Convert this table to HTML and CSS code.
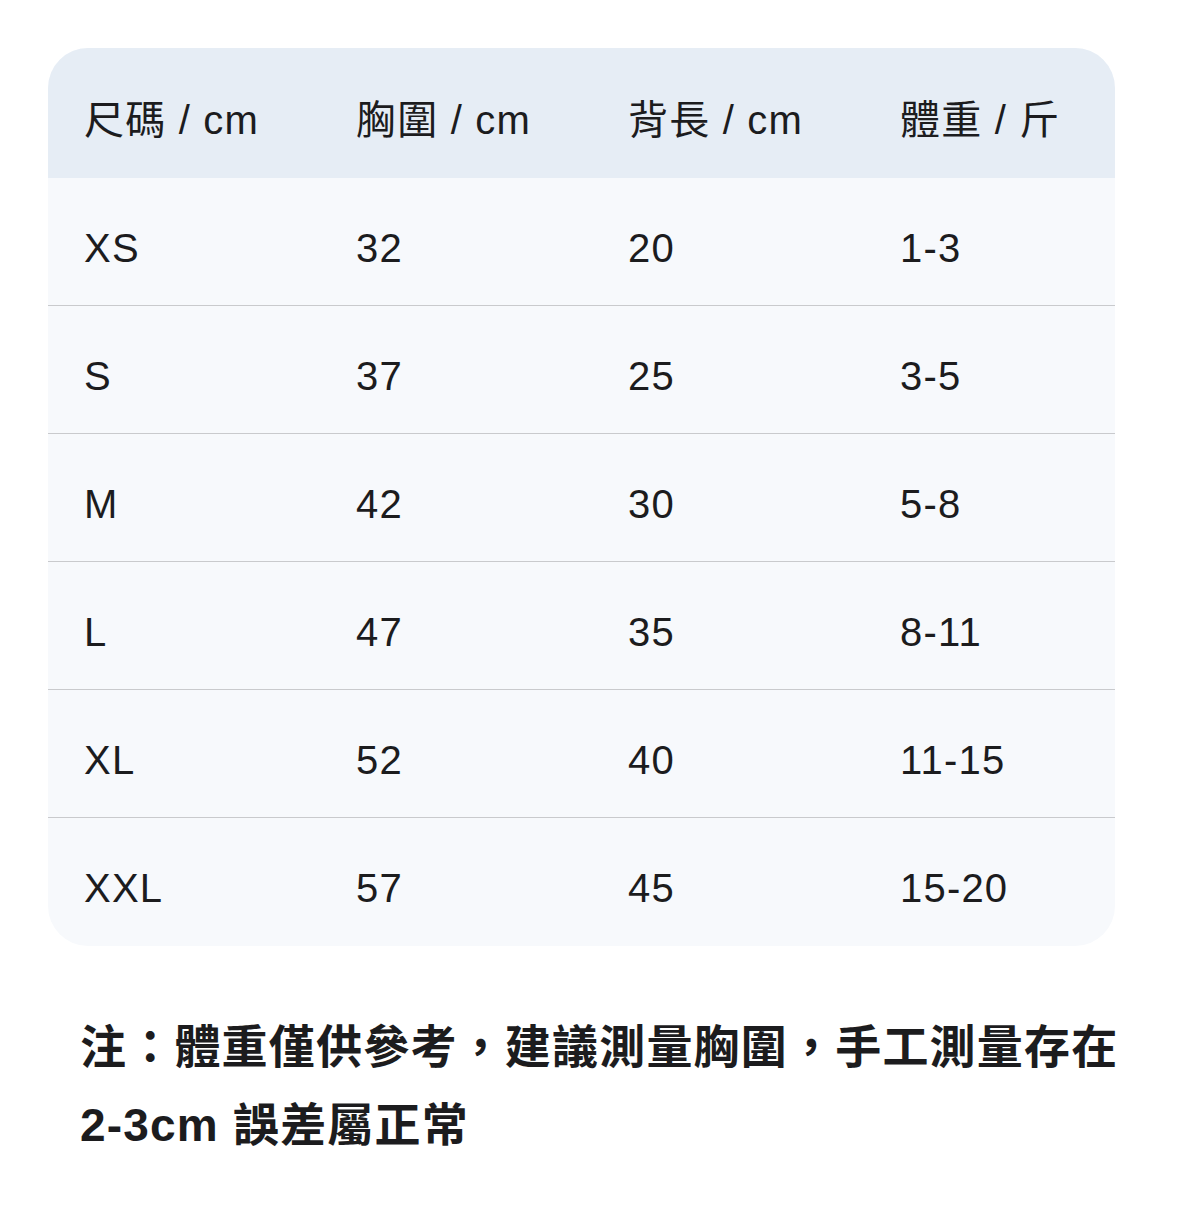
FILE: index.html
```html
<!DOCTYPE html>
<html lang="zh-Hant">
<head>
<meta charset="utf-8">
<title>尺碼表</title>
<link rel="stylesheet" href="styles.css">
</head>
<body>
<div class="page">
  <div class="table">
    <div class="row head">
      <div class="cell">尺碼 / cm</div>
      <div class="cell">胸圍 / cm</div>
      <div class="cell">背長 / cm</div>
      <div class="cell">體重 / 斤</div>
    </div>
    <div class="row"><div class="cell">XS</div><div class="cell">32</div><div class="cell">20</div><div class="cell">1-3</div></div>
    <div class="row"><div class="cell">S</div><div class="cell">37</div><div class="cell">25</div><div class="cell">3-5</div></div>
    <div class="row"><div class="cell">M</div><div class="cell">42</div><div class="cell">30</div><div class="cell">5-8</div></div>
    <div class="row"><div class="cell">L</div><div class="cell">47</div><div class="cell">35</div><div class="cell">8-11</div></div>
    <div class="row"><div class="cell">XL</div><div class="cell">52</div><div class="cell">40</div><div class="cell">11-15</div></div>
    <div class="row last"><div class="cell">XXL</div><div class="cell">57</div><div class="cell">45</div><div class="cell">15-20</div></div>
  </div>
  <p class="note">注：體重僅供參考，建議測量胸圍，手工測量存在 2-3cm 誤差屬正常</p>
</div>
</body>
</html>
```

FILE: styles.css
```css
html, body {
  margin: 0;
  padding: 0;
  background: #ffffff;
}
body {
  font-family: "Liberation Sans", "Noto Sans CJK TC", sans-serif;
  color: #1c1c1e;
}
.page {
  padding: 48px 0 0 48px;
}
.table {
  width: 1067px;
  border-radius: 40px;
  overflow: hidden;
  background: #f7f9fc;
}
.row {
  box-sizing: border-box;
  display: grid;
  grid-template-columns: 272px 272px 272px 1fr;
  padding-left: 36px;
  height: 128px;
  align-items: center;
  border-bottom: 1px solid #c9cacd;
  font-size: 40px;
  letter-spacing: 1.2px;
}
.row.head {
  height: 130px;
  background: #e6edf5;
  border-bottom: none;
}
.row.last {
  border-bottom: none;
}
.cell {
  padding-top: 12px;
  line-height: 1;
  white-space: nowrap;
}
.head .cell {
  padding-top: 14px;
}
.note {
  margin: 62px 0 0 32px;
  width: 1060px;
  font-size: 46px;
  line-height: 78px;
  font-weight: 700;
  letter-spacing: 1.2px;
  color: #1c1c1e;
}
```
